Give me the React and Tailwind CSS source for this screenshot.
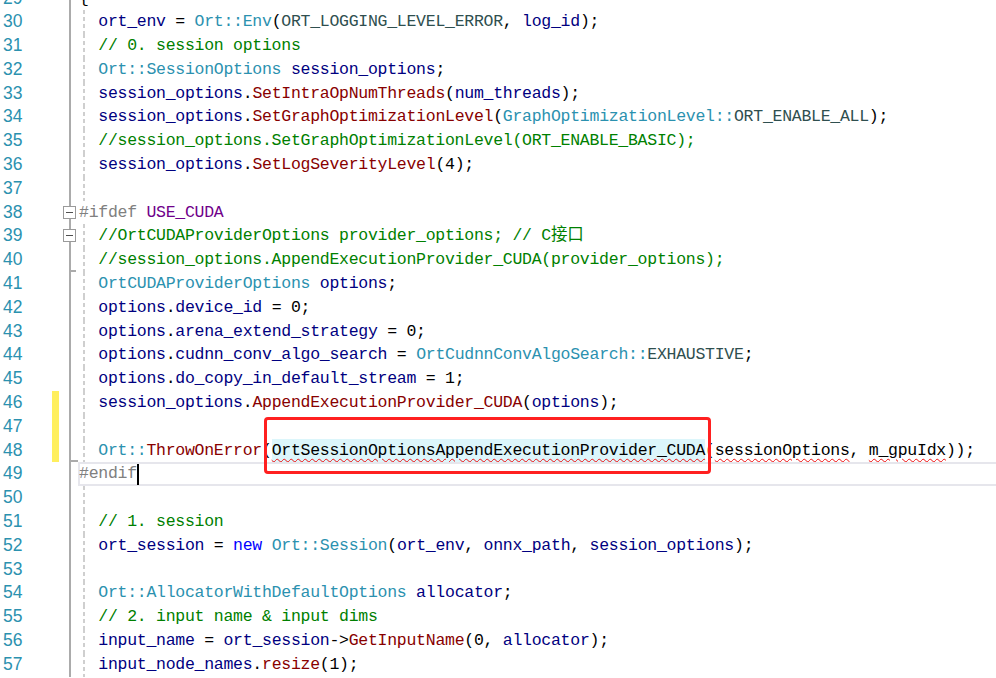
import React from "react";

// token colours (Visual Studio light theme)
const TOK = {
  t: "text-[#2b91af]",
  v: "text-[#000080]",
  f: "text-[#880000]",
  e: "text-[#2f4f4f]",
  m: "text-[#6f008a]",
  p: "text-[#808080]",
  c: "text-[#008000]",
  k: "text-[#0000ff]",
  x: "",
  s: "underline decoration-wavy decoration-[#f01010] decoration-1 underline-offset-[3px]",
  h: "inline-block bg-[#dcf6fb] underline decoration-wavy decoration-[#f01010] decoration-1 underline-offset-[3px]",
};

// g = indented (draws the dashed indent guide), o = outlining glyph
const lines = [
  { n: 29, code: [["x", "{"]] },
  { n: 30, g: 1, code: [["v", "ort_env"], ["x", " = "], ["t", "Ort::Env"], ["x", "("], ["e", "ORT_LOGGING_LEVEL_ERROR"], ["x", ", "], ["v", "log_id"], ["x", ");"]] },
  { n: 31, g: 1, code: [["c", "// 0. session options"]] },
  { n: 32, g: 1, code: [["t", "Ort::SessionOptions"], ["x", " "], ["v", "session_options"], ["x", ";"]] },
  { n: 33, g: 1, code: [["v", "session_options"], ["x", "."], ["f", "SetIntraOpNumThreads"], ["x", "("], ["v", "num_threads"], ["x", ");"]] },
  { n: 34, g: 1, code: [["v", "session_options"], ["x", "."], ["f", "SetGraphOptimizationLevel"], ["x", "("], ["t", "GraphOptimizationLevel::"], ["e", "ORT_ENABLE_ALL"], ["x", ");"]] },
  { n: 35, g: 1, code: [["c", "//session_options.SetGraphOptimizationLevel(ORT_ENABLE_BASIC);"]] },
  { n: 36, g: 1, code: [["v", "session_options"], ["x", "."], ["f", "SetLogSeverityLevel"], ["x", "(4);"]] },
  { n: 37, g: 1, code: [] },
  { n: 38, o: "box", code: [["p", "#ifdef "], ["m", "USE_CUDA"]] },
  { n: 39, g: 1, o: "box", code: [["c", "//OrtCUDAProviderOptions provider_options; // C接口"]] },
  { n: 40, g: 1, o: "tick", code: [["c", "//session_options.AppendExecutionProvider_CUDA(provider_options);"]] },
  { n: 41, g: 1, code: [["t", "OrtCUDAProviderOptions"], ["x", " "], ["v", "options"], ["x", ";"]] },
  { n: 42, g: 1, code: [["v", "options"], ["x", "."], ["v", "device_id"], ["x", " = 0;"]] },
  { n: 43, g: 1, code: [["v", "options"], ["x", "."], ["v", "arena_extend_strategy"], ["x", " = 0;"]] },
  { n: 44, g: 1, code: [["v", "options"], ["x", "."], ["v", "cudnn_conv_algo_search"], ["x", " = "], ["t", "OrtCudnnConvAlgoSearch::"], ["e", "EXHAUSTIVE"], ["x", ";"]] },
  { n: 45, g: 1, code: [["v", "options"], ["x", "."], ["v", "do_copy_in_default_stream"], ["x", " = 1;"]] },
  { n: 46, g: 1, mark: 1, code: [["v", "session_options"], ["x", "."], ["f", "AppendExecutionProvider_CUDA"], ["x", "("], ["v", "options"], ["x", ");"]] },
  { n: 47, g: 1, mark: 1, code: [] },
  { n: 48, g: 1, mark: 1, o: "end", code: [["t", "Ort::"], ["f", "ThrowOnError"], ["x", "("], ["h", "OrtSessionOptionsAppendExecutionProvider_CUDA"], ["x", "("], ["s", "sessionOptions"], ["x", ", "], ["s", "m_gpuIdx"], ["x", "));"]] },
  { n: 49, cur: 1, code: [["p", "#endif"]] },
  { n: 50, g: 1, code: [] },
  { n: 51, g: 1, code: [["c", "// 1. session"]] },
  { n: 52, g: 1, code: [["v", "ort_session"], ["x", " = "], ["k", "new"], ["x", " "], ["t", "Ort::Session"], ["x", "("], ["v", "ort_env"], ["x", ", "], ["v", "onnx_path"], ["x", ", "], ["v", "session_options"], ["x", ");"]] },
  { n: 53, g: 1, code: [] },
  { n: 54, g: 1, code: [["t", "Ort::AllocatorWithDefaultOptions"], ["x", " "], ["v", "allocator"], ["x", ";"]] },
  { n: 55, g: 1, code: [["c", "// 2. input name & input dims"]] },
  { n: 56, g: 1, code: [["v", "input_name"], ["x", " = "], ["v", "ort_session"], ["x", "->"], ["f", "GetInputName"], ["x", "(0, "], ["v", "allocator"], ["x", ");"]] },
  { n: 57, g: 1, code: [["v", "input_node_names"], ["x", "."], ["f", "resize"], ["x", "(1);"]] },
];

const Row = ({ line }) => {
  return (
    <div className="flex h-[23.8px] leading-[23.8px]">
      {/* line number */}
      <div className="w-[45px] shrink-0 pl-[3px] text-[17.5px] text-[#2b91af] font-['Liberation_Sans',sans-serif]">
        {line.n}
      </div>
      {/* change marker */}
      <div className="w-[17px] shrink-0 pl-[7px] flex">
        {line.mark && <div className="w-[7px] h-full bg-[#ffef5e]" />}
      </div>
      {/* outlining margin */}
      <div className="relative w-[16px] shrink-0 bg-[linear-gradient(to_right,transparent_7px,#ababab_7px,#ababab_9px,transparent_9px)]">
        {line.o === "box" && (
          <div className="absolute left-[1px] top-[5px] w-[13px] h-[13px] border border-[#9a9a9a] bg-white flex items-center justify-center">
            <div className="w-[7px] h-[1px] bg-[#505050]" />
          </div>
        )}
        {line.o === "tick" && <div className="absolute left-[7px] bottom-0 w-[7px] h-[2px] bg-[#ababab]" />}
        {line.o === "end" && <div className="absolute left-[7px] bottom-0 w-[9px] h-[2px] bg-[#ababab]" />}
      </div>
      {/* code */}
      <div
        className={
          "flex w-[940px] shrink-0 pl-[1px] whitespace-pre text-[16.5px] tracking-[-0.27px] font-['Liberation_Mono','Noto_Sans_CJK_SC',monospace] text-black " +
          (line.cur ? "shadow-[inset_0_0_0_2px_#e6e6ec]" : "")
        }
      >
        {line.g && (
          <div className="w-[19.26px] shrink-0 pl-[4px]">
            <div className="w-[2px] h-full bg-[repeating-linear-gradient(to_bottom,#cfcfcf_0px,#cfcfcf_4px,transparent_4px,transparent_7px)]" />
          </div>
        )}
        <div>
          {line.code.map(([k, s], i) => (
            <span key={i} className={TOK[k]}>
              {s}
            </span>
          ))}
          {line.cur && <span className="inline-block w-[2px] h-[21px] bg-black align-middle" />}
        </div>
      </div>
    </div>
  );
};

export default function App() {
  return (
    <div className="relative w-[996px] h-[678px] overflow-hidden bg-white">
      <div className="-mt-[13.5px]">
        {lines.map((l) => (
          <Row key={l.n} line={l} />
        ))}
      </div>
      {/* red annotation box */}
      <div className="absolute left-[264px] top-[417px] w-[447px] h-[57px] border-[3px] border-[#ff2020] rounded-[4px]" />
    </div>
  );
}
